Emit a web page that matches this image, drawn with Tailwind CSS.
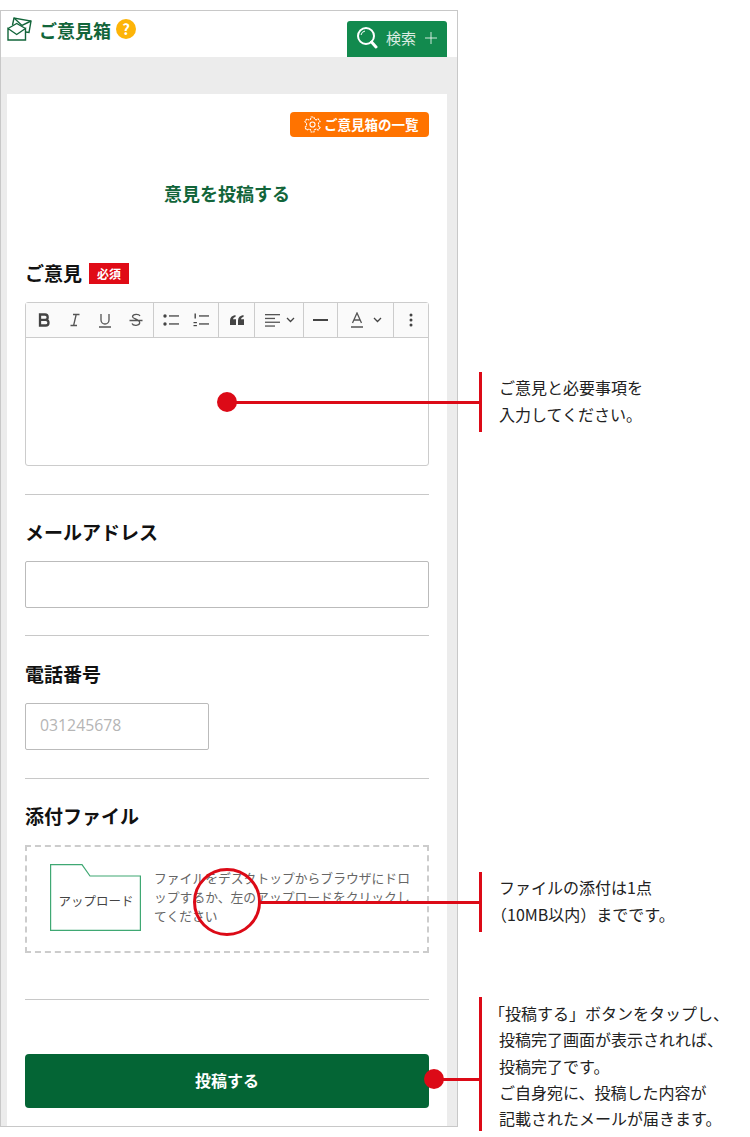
<!DOCTYPE html>
<html lang="ja">
  <head>
    <meta charset="utf-8" />
    <meta content="width=device-width, initial-scale=1" name="viewport" />
    <title>ご意見箱</title>
    <script src="https://cdn.jsdelivr.net/npm/@tailwindcss/browser@4"></script>
  </head>
  <body class="bg-white font-['Noto_Sans_CJK_JP','Noto_Sans',sans-serif]">
    <div class="relative w-[750px] h-[1137px] overflow-hidden pt-[10px]">

      <!-- Phone frame -->
      <div class="w-[458px] h-[1117px] border border-[#c8c8c8] bg-[#ececec] flex flex-col">

        <!-- Header -->
        <div class="h-[46px] bg-white flex justify-between pl-[6px] pr-[10px]">
          <div class="flex items-start pt-[6px]">
            <svg class="w-[25px] h-[24px]" viewBox="0 0 25 24" fill="none" stroke="#12653a" stroke-width="1.4">
              <path d="M1 11.5 V23 H18.5 V11.5 L9.7 17.5 Z" />
              <path d="M1 11.5 L9.7 6.5 L18.5 11.5" />
              <path d="M5.5 8 L7 1 L24 4 L22 15.5 L18.5 15" />
              <path d="M7 1 L15 8.5 L24 4" />
            </svg>
            <span class="ml-[7px] text-[18px] leading-[26px] font-bold text-[#12653a]">ご意見箱</span>
            <span class="ml-[5px] mt-[2px] w-[20px] h-[20px] rounded-full bg-[#fdb408] text-white text-[15px] leading-[20px] font-bold text-center">?</span>
          </div>
          <div class="mt-[10px] w-[100px] h-[36px] bg-[#128a4e] rounded-t-[3px] flex items-center pl-[9px] text-white/85">
            <svg class="mb-[2px] w-[22px] h-[24px]" viewBox="0 0 22 24" fill="none" stroke="#ffffff">
              <circle cx="10" cy="10" r="8" stroke-width="2" />
              <path d="M5 9 A5 5 0 0 1 9 5" stroke-width="1" />
              <path d="M15.5 16 L20 21" stroke-width="3" stroke-linecap="round" />
            </svg>
            <span class="ml-[8px] mb-[4px] text-[15px] leading-none">検索</span>
            <svg class="ml-[9px] mb-[2px] w-[12px] h-[12px]" viewBox="0 0 12 12" stroke="#ffffff" stroke-opacity="0.8" stroke-width="1">
              <path d="M6 0 V12 M0 6 H12" />
            </svg>
          </div>
        </div>

        <!-- Card -->
        <div class="mt-[37px] ml-[6px] mr-[10px] flex-1 bg-white px-[18px] pt-[18px]">
          <div class="flex justify-end">
            <div class="w-[139px] h-[25px] bg-[#ff7300] rounded-[4px] flex items-center pl-[14px] text-white">
              <svg class="w-[17px] h-[17px]" viewBox="0 0 24 24" fill="none" stroke="#ffffff" stroke-width="1.5">
                <circle cx="12" cy="12" r="3.6" />
                <path d="M10 1.5 H14 L14.8 4.6 L17.2 5.6 L20 4 L22.8 8 L20.4 10 V14 L22.8 16 L20 20 L17.2 18.4 L14.8 19.4 L14 22.5 H10 L9.2 19.4 L6.8 18.4 L4 20 L1.2 16 L3.6 14 V10 L1.2 8 L4 4 L6.8 5.6 L9.2 4.6 Z" stroke-dasharray="3 1" />
              </svg>
              <span class="ml-[3px] text-[13.5px] leading-none font-bold whitespace-nowrap">ご意見箱の一覧</span>
            </div>
          </div>

          <h1 class="mt-[42px] text-center text-[18px] leading-[28px] font-bold text-[#12653a]">意見を投稿する</h1>

          <!-- Opinion -->
          <div class="mt-[52px] h-[28px] flex items-center">
            <span class="text-[19px] leading-[28px] font-bold text-[#111111]">ご意見</span>
            <span class="ml-[7px] w-[40px] h-[21px] bg-[#e00b16] text-white text-[12px] leading-[21px] font-bold text-center">必須</span>
          </div>
          <div class="mt-[15px] h-[164px] border border-[#cccccc] rounded-[3px] flex flex-col">
            <div class="h-[35px] bg-[#fafafa] border-b border-[#cccccc] flex text-[#444444]">
              <div class="w-[128px] border-r border-[#cccccc] flex items-center justify-between pl-[11px] pr-[10px]">
                <svg class="w-[14px] h-[14px]" viewBox="0 0 14 14" fill="none" stroke="#444444" stroke-width="2.3"><path d="M3 1.5 H8 A2.7 2.7 0 0 1 8 6.9 H3 Z M3 6.9 H8.7 A2.8 2.8 0 0 1 8.7 12.5 H3 Z" /></svg>
                <svg class="w-[14px] h-[14px]" viewBox="0 0 14 14" fill="none" stroke="#555555" stroke-width="1.3"><path d="M5 1.5 H11.5 M2.5 12.5 H9 M8.2 1.5 L5.6 12.5" /></svg>
                <svg class="w-[14px] h-[15px]" viewBox="0 0 14 15" fill="none" stroke="#555555" stroke-width="1.3"><path d="M3 1 V7 A4 4 0 0 0 11 7 V1 M1 14 H13" /></svg>
                <svg class="w-[14px] h-[15px]" viewBox="0 0 14 15" fill="none" stroke="#555555" stroke-width="1.3"><path d="M11 3 C10 0.8 4 0.7 3.5 3.6 C3.2 6 10.5 6 10.7 9.8 C10.7 13 4 13 3 10.5 M0.5 7.5 H13.5" /></svg>
              </div>
              <div class="w-[65px] border-r border-[#cccccc] flex items-center justify-between pl-[9px] pr-[9px]">
                <svg class="w-[16px] h-[14px]" viewBox="0 0 16 14" fill="#444444"><circle cx="2" cy="3" r="1.7" /><circle cx="2" cy="11" r="1.7" /><rect x="6" y="2.3" width="10" height="1.3" /><rect x="6" y="10.3" width="10" height="1.3" /></svg>
                <svg class="w-[16px] h-[14px]" viewBox="0 0 16 14" fill="#444444"><rect x="1.5" y="0.5" width="1.4" height="5" /><rect x="0.5" y="9" width="3.4" height="1.2" /><rect x="0.5" y="12" width="3.4" height="1.2" /><rect x="6" y="2.3" width="10" height="1.3" /><rect x="6" y="10.3" width="10" height="1.3" /></svg>
              </div>
              <div class="w-[36px] border-r border-[#cccccc] flex items-center justify-center">
                <svg class="w-[14px] h-[10px]" viewBox="0 0 14 10" fill="#444444"><path d="M0 10 V5.5 C0 2.5 2 0.5 5.5 0 V2 C4 2.4 3.2 3.2 3 4.2 H6 V10 Z M8 10 V5.5 C8 2.5 10 0.5 13.5 0 V2 C12 2.4 11.2 3.2 11 4.2 H14 V10 Z" /></svg>
              </div>
              <div class="w-[49px] border-r border-[#cccccc] flex items-center pl-[10px]">
                <svg class="w-[15px] h-[13px]" viewBox="0 0 15 13" fill="#555555"><rect width="15" height="1.3" /><rect y="3.8" width="10" height="1.3" /><rect y="7.6" width="15" height="1.3" /><rect y="11.4" width="10" height="1.3" /></svg>
                <svg class="ml-[6px] w-[9px] h-[6px]" viewBox="0 0 9 6" fill="none" stroke="#444444" stroke-width="1.3"><path d="M1 1 L4.5 4.5 L8 1" /></svg>
              </div>
              <div class="w-[34px] border-r border-[#cccccc] flex items-center justify-center">
                <div class="w-[15px] h-[2px] bg-[#444444]"></div>
              </div>
              <div class="w-[56px] border-r border-[#cccccc] flex items-center pl-[12px]">
                <svg class="w-[14px] h-[16px]" viewBox="0 0 14 16" fill="none" stroke="#555555" stroke-width="1.3"><path d="M2.5 11 L7 1 L11.5 11 M4 8 H10 M1 15 H13" /></svg>
                <svg class="ml-[9px] w-[9px] h-[6px]" viewBox="0 0 9 6" fill="none" stroke="#444444" stroke-width="1.3"><path d="M1 1 L4.5 4.5 L8 1" /></svg>
              </div>
              <div class="flex-1 flex items-center justify-center">
                <svg class="w-[4px] h-[14px]" viewBox="0 0 4 14" fill="#444444"><circle cx="2" cy="2" r="1.5" /><circle cx="2" cy="7" r="1.5" /><circle cx="2" cy="12" r="1.5" /></svg>
              </div>
            </div>
          </div>
          <div class="mt-[28px] border-t border-[#c8c8c8]"></div>

          <!-- Email -->
          <h2 class="mt-[23px] text-[19px] leading-[28px] font-bold text-[#111111]">メールアドレス</h2>
          <div class="mt-[15px] h-[47px] border border-[#bbbbbb] rounded-[2px]"></div>
          <div class="mt-[27px] border-t border-[#c8c8c8]"></div>

          <!-- Tel -->
          <h2 class="mt-[24px] text-[19px] leading-[28px] font-bold text-[#111111]">電話番号</h2>
          <div class="mt-[15px] w-[184px] h-[47px] border border-[#bbbbbb] rounded-[2px] pl-[14px] text-[15.8px] leading-[43px] text-[#b5b5b5] font-['Open_Sans',sans-serif]">031245678</div>
          <div class="mt-[28px] border-t border-[#c8c8c8]"></div>

          <!-- Attachment -->
          <h2 class="mt-[23px] text-[19px] leading-[28px] font-bold text-[#111111]">添付ファイル</h2>
          <div class="mt-[15px] h-[108px] border-2 border-dashed border-[#cccccc] flex items-start pl-[23px] pt-[17px] pr-[14px]">
            <div class="relative w-[91px] h-[67px] shrink-0">
              <svg class="absolute inset-0 w-[91px] h-[67px]" viewBox="0 0 91 67" fill="none" stroke="#3fa873" stroke-width="1.2">
                <path d="M0.6 0.6 H32 L40 12 H90.4 V66.4 H0.6 Z" />
              </svg>
              <span class="absolute left-[1px] right-0 top-[28px] text-center text-[12.5px] leading-[18px] text-[#444444]">アップロード</span>
            </div>
            <p class="ml-[13px] mt-[4px] text-[12.8px] leading-[19px] text-[#666666]">ファイルをデスクトップからブラウザにドロップするか、左のアップロードをクリックしてください</p>
          </div>
          <div class="mt-[46px] border-t border-[#c8c8c8]"></div>

          <!-- Submit -->
          <div class="mt-[54px] h-[54px] bg-[#046535] rounded-[4px] flex items-center justify-center text-white text-[16px] font-bold pb-[3px]">投稿する</div>
        </div>
      </div>

      <!-- Callout 1 -->
      <div class="absolute left-[217px] top-[392px] w-[20px] h-[20px] rounded-full bg-[#dc0a17]"></div>
      <div class="absolute left-[227px] top-[401px] w-[253px] h-[3px] bg-[#dc0a17]"></div>
      <div class="absolute left-[479px] top-[372px] w-[3px] h-[60px] bg-[#dc0a17]"></div>
      <p class="absolute left-[499px] top-[374px] text-[16px] leading-[27px] text-[#222222] whitespace-nowrap">ご意見と必要事項を<br />入力してください。</p>

      <!-- Callout 2 -->
      <div class="absolute left-[193px] top-[868px] w-[68px] h-[68px] rounded-full border-[3px] border-[#dc0a17]"></div>
      <div class="absolute left-[260px] top-[901px] w-[220px] h-[3px] bg-[#dc0a17]"></div>
      <div class="absolute left-[479px] top-[872px] w-[3px] h-[60px] bg-[#dc0a17]"></div>
      <p class="absolute left-[499px] top-[874px] text-[16px] leading-[27px] text-[#222222] whitespace-nowrap">ファイルの添付は1点<br /><span class="-ml-[8px]">（10MB以内）までです。</span></p>

      <!-- Callout 3 -->
      <div class="absolute left-[424px] top-[1069px] w-[20px] h-[20px] rounded-full bg-[#dc0a17]"></div>
      <div class="absolute left-[434px] top-[1078px] w-[46px] h-[3px] bg-[#dc0a17]"></div>
      <div class="absolute left-[479px] top-[997px] w-[3px] h-[134px] bg-[#dc0a17]"></div>
      <p class="absolute left-[489px] top-[1000px] text-[16px] leading-[26.25px] text-[#222222] whitespace-nowrap">「投稿する」ボタンをタップし、<br /><span class="ml-[10px]">投稿完了画面が表示されれば、</span><br /><span class="ml-[10px]">投稿完了です。</span><br /><span class="ml-[10px]">ご自身宛に、投稿した内容が</span><br /><span class="ml-[10px]">記載されたメールが届きます。</span></p>

    </div>
  </body>
</html>
